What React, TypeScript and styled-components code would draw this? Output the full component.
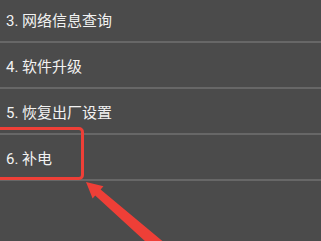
import React from 'react';
import styled, { createGlobalStyle } from 'styled-components';

const GlobalStyle = createGlobalStyle`
  html, body {
    margin: 0;
    padding: 0;
    background-color: #4b4b4b;
    overflow: hidden;
  }
`;

const items = ['3. 网络信息查询', '4. 软件升级', '5. 恢复出厂设置', '6. 补电'];

const App = () => {
  return (
    <React.Fragment>
      <GlobalStyle />
      <Screen>
        <MenuList>
          {items.map((label) => (
            <MenuItem key={label}>
              <Label>{label}</Label>
            </MenuItem>
          ))}
        </MenuList>

        <Highlight />
        <Arrow width="321" height="241" viewBox="0 0 321 241">
          <polygon
            points="86,182 103.5,186.3 100.6,189.6 166,244 158,253 95.2,195.6 92.6,198.6"
            fill="#ee3f37"
          />
        </Arrow>
      </Screen>
    </React.Fragment>
  );
};

const Screen = styled.div`
  position: relative;
  width: 321px;
  height: 241px;
  overflow: hidden;
  background-color: #4b4b4b;
`;

const MenuList = styled.ul`
  list-style: none;
  margin: -3px 0 0;
  padding: 0;
`;

const MenuItem = styled.li`
  display: flex;
  align-items: center;
  height: 44px;
  padding: 0 6px;
  border-bottom: 2px solid #676767;
`;

const Label = styled.span`
  font-family: Roboto, 'Noto Sans CJK SC', sans-serif;
  font-size: 15px;
  color: #f2f2f2;
  white-space: nowrap;
  padding-top: 1px;
`;

// ** 빨간 강조 박스 **
const Highlight = styled.div`
  position: absolute;
  left: -10px;
  top: 127px;
  width: 88px;
  height: 47px;
  border: 3px solid #ee3f37;
  border-radius: 5px;
`;

const Arrow = styled.svg`
  position: absolute;
  left: 0;
  top: 0;
`;

export default App;
